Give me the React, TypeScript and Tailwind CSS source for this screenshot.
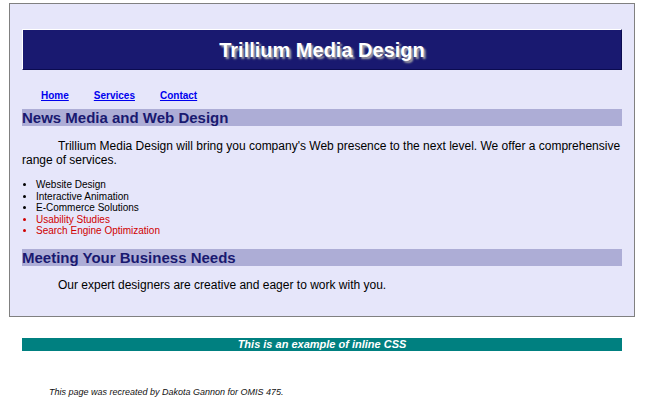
import React from "react";

export default function App() {
  return (
    <div className="min-h-[414px] w-[653px] bg-white font-['Liberation_Sans',Arial,sans-serif] text-black">
      <div className="ml-[9px] pt-[3px]">
        <div className="h-[314px] w-[626px] border border-[#808080] bg-[#e6e6fa] px-[12px]">
          <div className="mt-[25px] flex h-[41px] w-[600px] items-center justify-center border border-t-white border-l-white border-r-[#0b0b50] border-b-[#0b0b50] bg-[#191970]">
            <h1 className="text-[20px] font-bold leading-none text-white [text-shadow:2px_2px_2px_#a9a9a9]">
              Trillium Media Design
            </h1>
          </div>
          <nav className="mt-[20px] flex h-[12px] gap-[25px] pl-[19px] text-[10px] font-bold leading-[12px]">
            <a href="#" className="text-[#0000ee] underline">Home</a>
            <a href="#" className="text-[#0000ee] underline">Services</a>
            <a href="#" className="text-[#0000ee] underline">Contact</a>
          </nav>
          <h2 className="mt-[7px] h-[17px] bg-[#adadd6] text-[15px] font-bold leading-[17px] text-[#191970]">
            News Media and Web Design
          </h2>
          <p className="mt-[13px] indent-[36px] text-[12px] leading-[14px]">
            Trillium Media Design will bring you company's Web presence to the next level. We offer a comprehensive range of services.
          </p>
          <ul className="mt-[12px] list-disc pl-[14px] text-[10px] leading-[11.5px]">
            <li>Website Design</li>
            <li>Interactive Animation</li>
            <li>E-Commerce Solutions</li>
            <li className="text-[#d00000]">Usability Studies</li>
            <li className="text-[#d00000]">Search Engine Optimization</li>
          </ul>
          <h2 className="mt-[12px] h-[17px] bg-[#adadd6] text-[15px] font-bold leading-[17px] text-[#191970]">
            Meeting Your Business Needs
          </h2>
          <p className="mt-[12px] indent-[36px] text-[12px] leading-[14px]">
            Our expert designers are creative and eager to work with you.
          </p>
        </div>
      </div>
      <div className="ml-[22px] mt-[21px] flex h-[13px] w-[600px] items-center justify-center bg-[#008080] text-[11px] font-bold italic leading-[13px] text-white">
        This is an example of inline CSS
      </div>
      <p className="ml-[49px] mt-[36px] text-[9px] italic leading-[10px] text-[#111]">
        This page was recreated by Dakota Gannon for OMIS 475.
      </p>
    </div>
  );
}
